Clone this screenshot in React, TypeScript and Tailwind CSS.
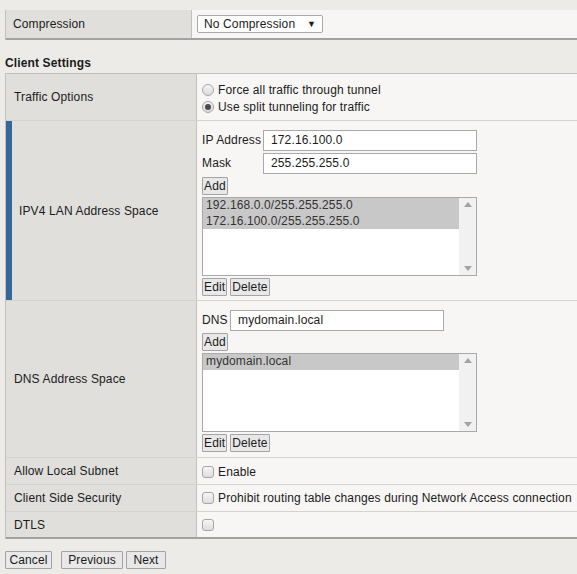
import React from 'react';

const font = { fontFamily: '"Liberation Sans", Arial, sans-serif' };

function Btn({ children, className = '' }: { children: React.ReactNode; className?: string }) {
  return (
    <button
      type="button"
      className={`h-[18px] px-[1px] border border-[#a3a3a3] bg-[#e8e8e8] text-[12px] leading-[16px] text-[#1b1b1b] rounded-[1px] ${className}`}
    >
      {children}
    </button>
  );
}

function Radio({ checked }: { checked?: boolean }) {
  return (
    <span className="w-[12px] h-[12px] rounded-full border border-[#a6a6a6] bg-gradient-to-b from-[#f4f4f4] to-[#dcdcdc] flex items-center justify-center shrink-0">
      {checked && <span className="w-[6px] h-[6px] rounded-full bg-[#4a4a4a]" />}
    </span>
  );
}

function Check() {
  return (
    <span className="w-[12px] h-[12px] rounded-[3px] border border-[#a6a6a6] bg-gradient-to-b from-[#f6f6f6] to-[#dedede] shrink-0" />
  );
}

function TextInput({ value, className = '' }: { value: string; className?: string }) {
  return (
    <div
      className={`h-[21px] border border-[#a9a9a9] bg-white pl-[7px] text-[12px] leading-[19px] text-[#1b1b1b] ${className}`}
    >
      {value}
    </div>
  );
}

function ListBox({ items }: { items: string[] }) {
  return (
    <div className="w-[275px] h-[79px] border border-[#a9a9a9] bg-white flex">
      <div className="flex-1 flex flex-col">
        {items.map((it) => (
          <div key={it} className="h-[15.5px] bg-[#c8c8c8] pl-[3px] text-[12px] leading-[15px] text-[#333]">
            {it}
          </div>
        ))}
      </div>
      <div className="w-[17px] bg-[#f1f1f1] flex flex-col items-center justify-between py-[4px]">
        <svg width="8" height="5" viewBox="0 0 8 5">
          <path d="M0 5 L4 0 L8 5 Z" fill="#a3a3a3" />
        </svg>
        <svg width="8" height="5" viewBox="0 0 8 5">
          <path d="M0 0 L4 5 L8 0 Z" fill="#a3a3a3" />
        </svg>
      </div>
    </div>
  );
}

function Row({
  label,
  children,
  h,
  accent,
  last,
}: {
  label: string;
  children: React.ReactNode;
  h: string;
  accent?: boolean;
  last?: boolean;
}) {
  return (
    <div className={`flex ${h} ${last ? 'border-b-2 border-[#a2a2a2]' : 'border-b border-[#d5d3cf]'}`}>
      <div className="w-[191px] shrink-0 bg-[#e0dfdb] border-r border-[#c2c0bc] flex items-center">
        {accent && <div className="w-[6px] self-stretch bg-[#34679a]" />}
        <span className={accent ? 'pl-[7px]' : 'pl-[8px]'}>{label}</span>
      </div>
      <div className="flex-1 bg-[#f7f6f4] pl-[5px]">{children}</div>
    </div>
  );
}

export default function App() {
  return (
    <div
      style={font}
      className="w-[577px] h-[574px] overflow-hidden bg-[#ecebe8] text-[12px] leading-[14px] tracking-[0.13px] text-[#1b1b1b] pl-[5px] pt-[10px]"
    >
      {/* top table */}
      <div className="w-[600px] border-l border-[#c2c0bc]">
        <div className="flex h-[30px] border-b-2 border-[#a2a2a2]">
          <div className="w-[186px] shrink-0 bg-[#e0dfdb] border-r border-[#c2c0bc] flex items-center pl-[7px]">
            Compression
          </div>
          <div className="flex-1 bg-[#f7f6f4] pl-[5px] pt-[5px]">
            <div className="w-[126px] h-[18px] border border-[#a9a9a9] rounded-[2px] bg-white flex items-center justify-between pl-[6px] pr-[6px]">
              <span>No Compression</span>
              <span className="text-[9px]">▼</span>
            </div>
          </div>
        </div>
      </div>

      <div className="font-bold text-[12px] mt-[16px] h-[17px] leading-[14px]">Client Settings</div>

      {/* client settings table */}
      <div className="w-[600px] border-l border-t border-[#c2c0bc]">
        <Row label="Traffic Options" h="h-[47px]">
          <div className="h-full flex flex-col justify-center gap-[3px] pt-[3px]">
            <div className="flex items-center gap-[4px]">
              <Radio />
              <span>Force all traffic through tunnel</span>
            </div>
            <div className="flex items-center gap-[4px]">
              <Radio checked />
              <span>Use split tunneling for traffic</span>
            </div>
          </div>
        </Row>

        <Row label="IPV4 LAN Address Space" h="h-[180px]" accent>
          <div className="pt-[9px] flex flex-col">
            <div className="flex items-center">
              <span className="w-[61px] -mt-[2px]">IP Address</span>
              <TextInput value="172.16.100.0" className="w-[214px]" />
            </div>
            <div className="flex items-center mt-[2px]">
              <span className="w-[61px] -mt-[2px]">Mask</span>
              <TextInput value="255.255.255.0" className="w-[214px]" />
            </div>
            <div className="mt-[3px]">
              <Btn>Add</Btn>
            </div>
            <div className="mt-[2px]">
              <ListBox items={['192.168.0.0/255.255.255.0', '172.16.100.0/255.255.255.0']} />
            </div>
            <div className="mt-[2px] flex gap-[3px]">
              <Btn>Edit</Btn>
              <Btn>Delete</Btn>
            </div>
          </div>
        </Row>

        <Row label="DNS Address Space" h="h-[157px]">
          <div className="pt-[9px] flex flex-col">
            <div className="flex items-center">
              <span className="w-[28px] -mt-[2px]">DNS</span>
              <TextInput value="mydomain.local" className="w-[214px]" />
            </div>
            <div className="mt-[2px]">
              <Btn>Add</Btn>
            </div>
            <div className="mt-[2px]">
              <ListBox items={['mydomain.local']} />
            </div>
            <div className="mt-[2px] flex gap-[3px]">
              <Btn>Edit</Btn>
              <Btn>Delete</Btn>
            </div>
          </div>
        </Row>

        <Row label="Allow Local Subnet" h="h-[27px]">
          <div className="h-full flex items-center gap-[4px] pt-[1px]">
            <Check />
            <span>Enable</span>
          </div>
        </Row>

        <Row label="Client Side Security" h="h-[27px]">
          <div className="h-full flex items-center gap-[4px]">
            <Check />
            <span>Prohibit routing table changes during Network Access connection</span>
          </div>
        </Row>

        <Row label="DTLS" h="h-[27px]" last>
          <div className="h-full flex items-center">
            <Check />
          </div>
        </Row>
      </div>

      <div className="mt-[12px] flex">
        <Btn className="w-[47px]">Cancel</Btn>
        <Btn className="w-[62px] ml-[9px]">Previous</Btn>
        <Btn className="w-[40px] ml-[3px]">Next</Btn>
      </div>
    </div>
  );
}
